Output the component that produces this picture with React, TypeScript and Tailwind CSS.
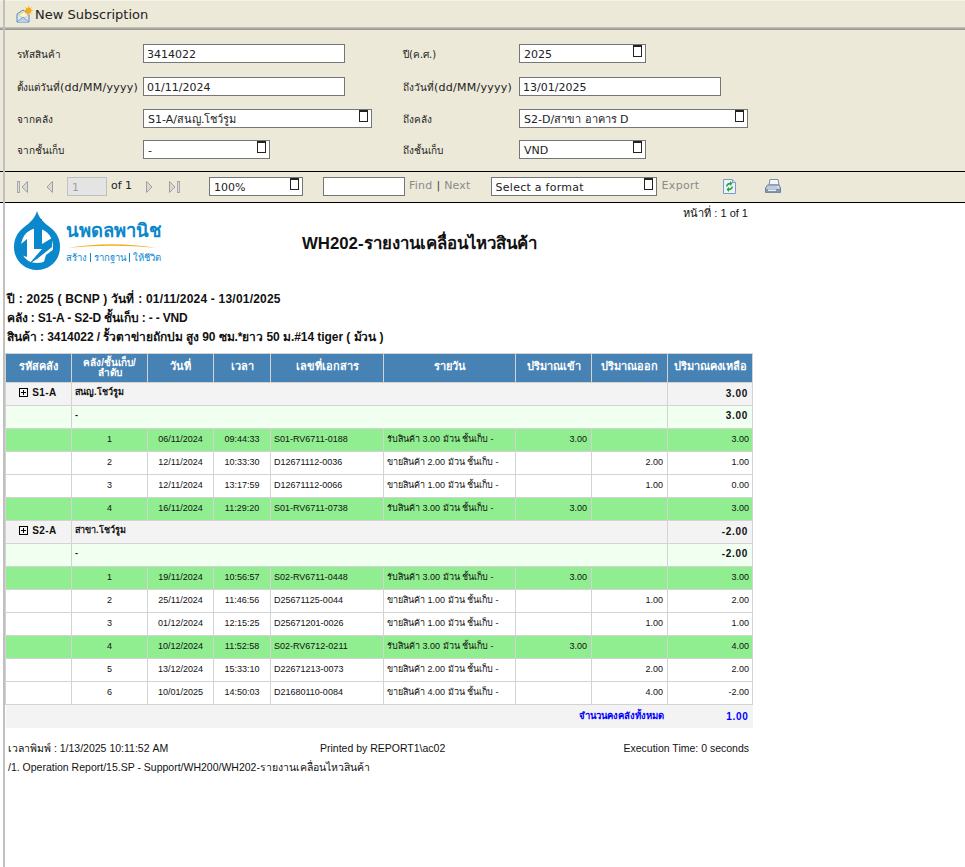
import type { ReactNode } from 'react';

const sans = 'font-["DejaVu_Sans","Noto_Sans",sans-serif]';

type Row = {
  seq: string;
  date: string;
  time: string;
  doc: string;
  desc: string;
  qtyIn?: string;
  qtyOut?: string;
  balance: string;
  green?: boolean;
};

type Group = { code: string; name: string; total: string; rows: Row[] };

const groups: Group[] = [
  {
    code: 'S1-A',
    name: 'สนญ.โชว์รูม',
    total: '3.00',
    rows: [
      { seq: '1', date: '06/11/2024', time: '09:44:33', doc: 'S01-RV6711-0188', desc: 'รับสินค้า 3.00 ม้วน ชั้นเก็บ -', qtyIn: '3.00', balance: '3.00', green: true },
      { seq: '2', date: '12/11/2024', time: '10:33:30', doc: 'D12671112-0036', desc: 'ขายสินค้า 2.00 ม้วน ชั้นเก็บ -', qtyOut: '2.00', balance: '1.00' },
      { seq: '3', date: '12/11/2024', time: '13:17:59', doc: 'D12671112-0066', desc: 'ขายสินค้า 1.00 ม้วน ชั้นเก็บ -', qtyOut: '1.00', balance: '0.00' },
      { seq: '4', date: '16/11/2024', time: '11:29:20', doc: 'S01-RV6711-0738', desc: 'รับสินค้า 3.00 ม้วน ชั้นเก็บ -', qtyIn: '3.00', balance: '3.00', green: true },
    ],
  },
  {
    code: 'S2-A',
    name: 'สาขา.โชว์รูม',
    total: '-2.00',
    rows: [
      { seq: '1', date: '19/11/2024', time: '10:56:57', doc: 'S02-RV6711-0448', desc: 'รับสินค้า 3.00 ม้วน ชั้นเก็บ -', qtyIn: '3.00', balance: '3.00', green: true },
      { seq: '2', date: '25/11/2024', time: '11:46:56', doc: 'D25671125-0044', desc: 'ขายสินค้า 1.00 ม้วน ชั้นเก็บ -', qtyOut: '1.00', balance: '2.00' },
      { seq: '3', date: '01/12/2024', time: '12:15:25', doc: 'D25671201-0026', desc: 'ขายสินค้า 1.00 ม้วน ชั้นเก็บ -', qtyOut: '1.00', balance: '1.00' },
      { seq: '4', date: '10/12/2024', time: '11:52:58', doc: 'S02-RV6712-0211', desc: 'รับสินค้า 3.00 ม้วน ชั้นเก็บ -', qtyIn: '3.00', balance: '4.00', green: true },
      { seq: '5', date: '13/12/2024', time: '15:33:10', doc: 'D22671213-0073', desc: 'ขายสินค้า 2.00 ม้วน ชั้นเก็บ -', qtyOut: '2.00', balance: '2.00' },
      { seq: '6', date: '10/01/2025', time: '14:50:03', doc: 'D21680110-0084', desc: 'ขายสินค้า 4.00 ม้วน ชั้นเก็บ -', qtyOut: '4.00', balance: '-2.00' },
    ],
  },
];

const TextBox = ({ value, width }: { value: string; width: string }) => (
  <div className={`h-[19px] ${width} border border-[#767676] bg-white pl-[3px] text-[11px] leading-[19px] text-[#222]`}>{value}</div>
);

const SelectBox = ({ value, width }: { value: string; width: string }) => (
  <div className={`relative h-[19px] ${width} border border-[#767676] bg-white pl-[4px] text-[11px] leading-[20px] text-[#222]`}>
    {value}
    <span className="absolute right-[3px] top-0 h-[12px] w-[9px] border-[1.5px] border-t-[2px] border-[#222] bg-white" />
  </div>
);

const Field = ({ label, suffix, labelWidth, children }: { label: string; suffix?: string; labelWidth: string; children: ReactNode }) => (
  <div className="flex items-start">
    <div className={`${labelWidth} shrink-0 pt-[4px] text-[10px] leading-[14px] text-[#222]`}>
      {label}
      {suffix && <span className="text-[11px] tracking-[0.25px]">{suffix}</span>}
    </div>
    {children}
  </div>
);

const NavIcon = ({ dir, bar }: { dir: 'left' | 'right'; bar?: boolean }) => (
  <svg width="12" height="12" viewBox="0 0 12 12" className={dir === 'right' ? '-scale-x-100' : ''}>
    {bar && <rect x="0.5" y="0.5" width="2" height="11" fill="#dcdcdc" stroke="#a8a8a8" />}
    <path d="M10.5 0.5 L5 6 L10.5 11.5 Z" fill="#d8d8d8" stroke="#a0a0a0" />
  </svg>
);

const SubscriptionIcon = () => (
  <svg width="17" height="17" viewBox="0 0 17 17">
    <path d="M1 8 L7 4 L13 8 V16 H1 Z" fill="#dce9f7" stroke="#5a86b8" />
    <path d="M2.5 9 L7.5 12.5 L12 9 L8 5.5 Z" fill="#fff6c8" stroke="#c9b873" strokeWidth="0.6" />
    <path d="M1 16 L7 11 L13 16" fill="#b9d2ee" stroke="#5a86b8" strokeWidth="0.7" />
    <path d="M12.5 0 V9 M8 4.5 H17 M9.3 1.3 L15.7 7.7 M15.7 1.3 L9.3 7.7" stroke="#f9c02c" strokeWidth="0.8" />
    <circle cx="12.5" cy="4.5" r="3" fill="#f9a81c" />
  </svg>
);

const RefreshIcon = () => (
  <svg width="13" height="15" viewBox="0 0 13 15">
    <path d="M0.5 0.5 H9.5 L12.5 3.5 V14.5 H0.5 Z" fill="#edf3fb" stroke="#7d9cc4" />
    <path d="M9.5 0.5 V3.5 H12.5" fill="#cfdff2" stroke="#7d9cc4" />
    <path d="M7 2 L9.5 4.5 L7 7 V5.5 C5.5 5.5 4.5 6.5 4.5 7.5 H3 C3 5.5 4.8 3.8 7 3.8 Z" fill="#22a53a" />
    <path d="M6 13 L3.5 10.5 L6 8 V9.5 C7.5 9.5 8.5 8.5 8.5 7.5 H10 C10 9.5 8.2 11.2 6 11.2 Z" fill="#22a53a" />
  </svg>
);

const PrintIcon = () => (
  <svg width="16" height="15" viewBox="0 0 16 15">
    <path d="M5 0.5 H13 L14 6 H4 Z" fill="#f2f5fa" stroke="#7f8fa6" />
    <path d="M2.5 6 H14 L15.5 9 V13.5 H0.5 V9 Z" fill="#bccadb" stroke="#6f7f98" />
    <rect x="1" y="10" width="14" height="3.5" fill="#8496ae" />
    <rect x="3" y="10.5" width="8" height="1.5" fill="#e9edf3" />
    <circle cx="13" cy="8" r="0.8" fill="#fff" />
  </svg>
);

const PlusBox = () => (
  <span className="relative inline-block h-[9px] w-[9px] border border-black">
    <span className="absolute left-[1px] top-[3px] h-px w-[5px] bg-black" />
    <span className="absolute left-[3px] top-[1px] h-[5px] w-px bg-black" />
  </span>
);

const Logo = () => (
  <div className="flex items-start gap-[5px]">
    <svg width="48" height="60" viewBox="0 0 48 60">
      <path
        d="M24 0 C26 7 31 12 38 17 C44 22 47 28 47 36 C47 49 37 59 24 59 C11 59 1 49 1 36 C1 28 4 22 10 17 C17 12 22 7 24 0 Z"
        fill="#0b87cc"
      />
      <path d="M24 17 C12 19 8 28 8 36 C8 46 15 52 24 52 C33 52 40 46 40 36 C40 28 36 19 24 17 Z" fill="#fff" />
      <path d="M21 8 H29 V33 L39 27 V36 L24 48 L16 53 L29 38 H21 Z" fill="#0b87cc" />
      <path d="M8 33 L14 28 V46 L8 44 Z" fill="#0b87cc" />
      <path d="M33 44 L41 38 L38 48 L30 54 Z" fill="#0b87cc" />
    </svg>
    <div className="flex flex-col pt-[9px] text-[#0b87cc]">
      <div className="text-[18.4px] font-bold leading-[22px]">นพดลพานิช</div>
      <svg width="92" height="6" viewBox="0 0 92 6" className="mt-[1px]">
        <path d="M2 5 C30 2 62 2 90 5 C62 0 30 0 2 5 Z" fill="#f2b01e" />
      </svg>
      <div className="mt-[1px] flex h-[15px] items-center text-[9.5px] leading-none">
        <span className="pr-[3px]">สร้าง</span>
        <span className="border-l border-[#0b87cc] px-[3px]">รากฐาน</span>
        <span className="border-l border-[#0b87cc] pl-[3px]">ให้ชีวิต</span>
      </div>
    </div>
  </div>
);

const cell = 'border border-[#d3d3d3]';

const DataRow = ({ row }: { row: Row }) => (
  <tr className={`h-[23px] ${row.green ? 'bg-[#90ee90]' : 'bg-white'}`}>
    <td className={cell} />
    <td className={`${cell} pb-[1px] text-center`}>{row.seq}</td>
    <td className={`${cell} pb-[1px] text-center`}>{row.date}</td>
    <td className={`${cell} pb-[1px] text-center`}>{row.time}</td>
    <td className={`${cell} pb-[1px] pl-[3px]`}>{row.doc}</td>
    <td className={`${cell} pb-[1px] pl-[3px]`}>{row.desc}</td>
    <td className={`${cell} pb-[1px] pr-[4px] text-right`}>{row.qtyIn}</td>
    <td className={`${cell} pb-[1px] pr-[4px] text-right`}>{row.qtyOut}</td>
    <td className={`${cell} pb-[1px] pr-[3px] text-right`}>{row.balance}</td>
  </tr>
);

const GroupRows = ({ group }: { group: Group }) => (
  <>
    <tr className="h-[23px] bg-[#f3f3f3] font-bold">
      <td className={`${cell} pb-[3px] pr-[1px] text-center text-[10px] tracking-[0.4px]`}>
        <span className="inline-flex items-center gap-[4px]">
          <PlusBox />
          {group.code}
        </span>
      </td>
      <td className={`${cell} pb-[3px] pl-[3px]`} colSpan={7}>
        {group.name}
      </td>
      <td className={`${cell} pb-[1px] pr-[4px] text-right text-[10px] tracking-[0.7px]`}>{group.total}</td>
    </tr>
    <tr className="h-[23px] bg-[#f0fff0] font-bold">
      <td className={cell} />
      <td className={`${cell} pb-[3px] pl-[3px]`} colSpan={7}>
        -
      </td>
      <td className={`${cell} pb-[3px] pr-[4px] text-right text-[10px] tracking-[0.7px]`}>{group.total}</td>
    </tr>
    {group.rows.map((row) => (
      <DataRow key={row.doc} row={row} />
    ))}
  </>
);

const headers: ReactNode[] = [
  'รหัสคลัง',
  <>
    คลัง/ชั้นเก็บ/
    <br />
    ลำดับ
  </>,
  'วันที่',
  'เวลา',
  'เลขที่เอกสาร',
  'รายวัน',
  'ปริมาณเข้า',
  'ปริมาณออก',
  'ปริมาณคงเหลือ',
];

const ReportTable = () => (
  <table className='w-[747px] table-fixed border-collapse font-["Liberation_Sans","Noto_Sans",sans-serif] text-[9px] text-[#111]'>
    <colgroup>
      <col className="w-[66px]" />
      <col className="w-[76px]" />
      <col className="w-[66px]" />
      <col className="w-[57px]" />
      <col className="w-[113px]" />
      <col className="w-[132px]" />
      <col className="w-[76px]" />
      <col className="w-[76px]" />
      <col className="w-[85px]" />
    </colgroup>
    <thead>
      <tr className="h-[29px] bg-[#4682b4] text-white">
        {headers.map((h, i) => (
          <th key={i} className={`border border-[#d3d3d3] text-center font-bold ${i === 1 ? 'text-[10px] leading-[10px]' : 'pb-[4px] text-[11px] leading-[12px]'}`}>
            {h}
          </th>
        ))}
      </tr>
    </thead>
    <tbody>
      {groups.map((g) => (
        <GroupRows key={g.code} group={g} />
      ))}
      <tr className="h-[23px] bg-[#f3f3f3] font-bold text-[#0000ff]">
        <td colSpan={8} className="pr-[4px] text-right text-[9.5px]">
          จำนวนคงคลังทั้งหมด
        </td>
        <td className="pr-[4px] text-right text-[10px] tracking-[0.7px]">1.00</td>
      </tr>
    </tbody>
  </table>
);

export default function App() {
  return (
    <div className={`relative min-h-[867px] bg-white ${sans}`}>
      <div className="absolute bottom-0 left-[3px] top-0 w-[2px] bg-[#c0c0c0]" />

      <div className="flex h-[27px] items-center gap-[2px] border-t border-t-[#f4f2e8] bg-[#ece9d8] pl-[16px] pt-[1px]">
        <SubscriptionIcon />
        <span className="text-[13px] text-[#222]">New Subscription</span>
      </div>
      <div className="h-[3px] bg-gradient-to-b from-[#c9c7b8] to-[#8f8f8a]" />

      <div className="flex h-[141px] flex-col gap-[13px] bg-[#ece9d8] pl-[17px] pt-[14px]">
        <div className="mb-[1px] flex h-[19px]">
          <div className="w-[386px]">
            <Field label="รหัสสินค้า" labelWidth="w-[126px]">
              <TextBox value="3414022" width="w-[202px]" />
            </Field>
          </div>
          <Field label="ปี(ค.ศ.)" labelWidth="w-[116px]">
            <SelectBox value="2025" width="w-[127px]" />
          </Field>
        </div>
        <div className="flex h-[19px]">
          <div className="w-[386px]">
            <Field label="ตั้งแต่วันที่" suffix="(dd/MM/yyyy)" labelWidth="w-[126px]">
              <TextBox value="01/11/2024" width="w-[202px]" />
            </Field>
          </div>
          <Field label="ถึงวันที่" suffix="(dd/MM/yyyy)" labelWidth="w-[116px]">
            <TextBox value="13/01/2025" width="w-[202px]" />
          </Field>
        </div>
        <div className="flex h-[19px]">
          <div className="w-[386px]">
            <Field label="จากคลัง" labelWidth="w-[126px]">
              <SelectBox value="S1-A/สนญ.โชว์รูม" width="w-[229px]" />
            </Field>
          </div>
          <Field label="ถึงคลัง" labelWidth="w-[116px]">
            <SelectBox value="S2-D/สาขา อาคาร D" width="w-[229px]" />
          </Field>
        </div>
        <div className="-mt-[1px] flex h-[19px]">
          <div className="w-[386px]">
            <Field label="จากชั้นเก็บ" labelWidth="w-[126px]">
              <SelectBox value="-" width="w-[127px]" />
            </Field>
          </div>
          <Field label="ถึงชั้นเก็บ" labelWidth="w-[116px]">
            <SelectBox value="VND" width="w-[127px]" />
          </Field>
        </div>
      </div>

      <div className="flex h-[32px] items-center border-y border-black bg-[#ece9d8] pb-[1px] pl-[17px] text-[11px]">
        <NavIcon dir="left" bar />
        <span className="w-[13px]" />
        <NavIcon dir="left" />
        <div className="ml-[13px] h-[19px] w-[40px] border border-[#c0c0c0] bg-[#e4e4e4] pl-[4px] leading-[19px] text-[#a0a0a0]">1</div>
        <span className="ml-[4px] text-[#222]">of 1</span>
        <span className="w-[13px]" />
        <NavIcon dir="right" />
        <span className="w-[11px]" />
        <NavIcon dir="right" bar />
        <div className="ml-[29px]">
          <SelectBox value="100%" width="w-[94px]" />
        </div>
        <div className="ml-[20px] h-[19px] w-[82px] border border-[#767676] bg-white" />
        <span className="ml-[4px] text-[#8a8a8a] tracking-[0.2px]">Find</span>
        <span className="mx-[4px] text-[#444]">|</span>
        <span className="text-[#8a8a8a] tracking-[0.2px]">Next</span>
        <div className="ml-[20px] tracking-[0.25px]">
          <SelectBox value="Select a format" width="w-[166px]" />
        </div>
        <span className="ml-[5px] text-[#8a8a8a] tracking-[0.3px]">Export</span>
        <span className="ml-[24px]">
          <RefreshIcon />
        </span>
        <span className="ml-[29px]">
          <PrintIcon />
        </span>
      </div>

      <div className='w-[752px] pl-[5px] font-["Liberation_Sans","Noto_Sans",sans-serif] text-[#111]'>
        <div className="pr-[4px] pt-[4px] text-right text-[11px] leading-[13px]">หน้าที่ : 1 of 1</div>
        <div className="relative -mt-[9px] h-[64px] pl-[8px]">
          <Logo />
          <div className="absolute left-[297px] top-[23px] text-[16.8px] font-bold leading-[20px]">WH202-รายงานเคลื่อนไหวสินค้า</div>
        </div>
        <div className="flex flex-col gap-[3px] pl-[2px] pt-[16px] text-[12px] font-bold leading-[16px]">
          <div className="tracking-[0.2px]">ปี : 2025 ( BCNP ) วันที่ : 01/11/2024 - 13/01/2025</div>
          <div className="tracking-[-0.15px]">คลัง : S1-A - S2-D ชั้นเก็บ : - - VND</div>
          <div className="tracking-[-0.06px]">สินค้า : 3414022 / รั้วตาข่ายถักปม สูง 90 ซม.*ยาว 50 ม.#14 tiger ( ม้วน )</div>
        </div>
        <div className="pt-[8px]">
          <ReportTable />
        </div>
        <div className="flex pl-[3px] pr-[3px] pt-[13px] text-[10.5px] leading-[14px]">
          <span className="w-[312px]">เวลาพิมพ์ : 1/13/2025 10:11:52 AM</span>
          <span>Printed by REPORT1\ac02</span>
          <span className="ml-auto">Execution Time: 0 seconds</span>
        </div>
        <div className="pl-[3px] pt-[5px] text-[10.5px] leading-[14px]">/1. Operation Report/15.SP - Support/WH200/WH202-รายงานเคลื่อนไหวสินค้า</div>
      </div>
    </div>
  );
}
